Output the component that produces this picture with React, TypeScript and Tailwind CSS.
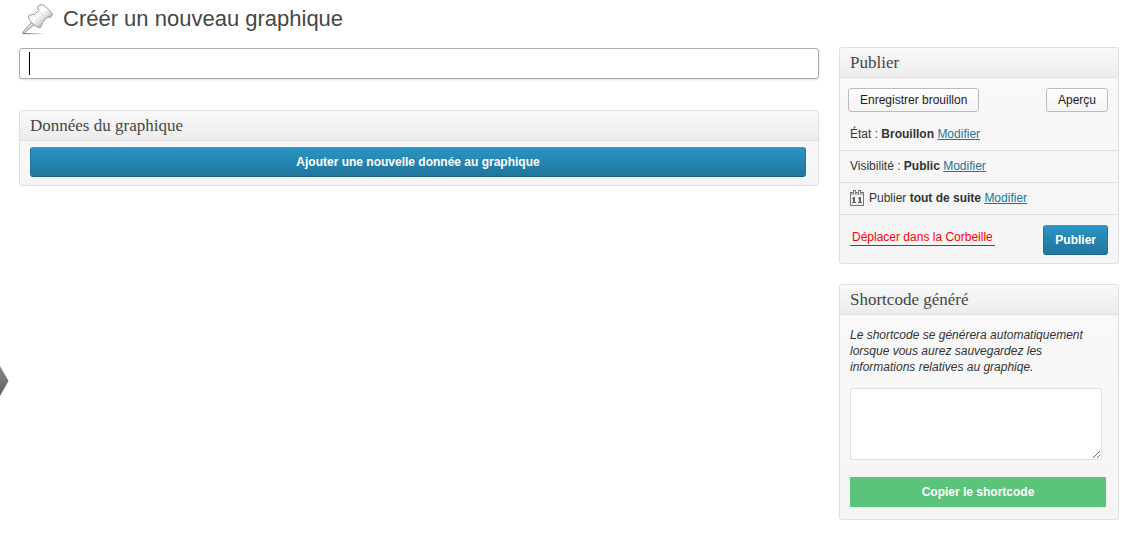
import type { ReactNode } from "react";

function PinIcon() {
  return (
    <svg width="32" height="32" viewBox="0 0 32 32" aria-hidden="true">
      <defs>
        <linearGradient id="pinBody" x1="0.2" y1="0.2" x2="0.8" y2="0.8">
          <stop offset="0" stopColor="#e6e6e6" />
          <stop offset="0.4" stopColor="#ffffff" />
          <stop offset="0.7" stopColor="#dddddd" />
          <stop offset="1" stopColor="#a8a8a8" />
        </linearGradient>
        <linearGradient id="pinShadow" x1="0" y1="0" x2="1" y2="0">
          <stop offset="0" stopColor="#777777" />
          <stop offset="1" stopColor="#777777" stopOpacity="0" />
        </linearGradient>
      </defs>
      <rect x="2" y="29" width="23" height="1.2" fill="url(#pinShadow)" />
      <path d="M10.8 18 L13.4 20.4 L3.4 29 L1.6 29.4 L2.2 27.8 Z" fill="#dedede" stroke="#858585" strokeWidth="0.9" strokeLinejoin="round" />
      <path
        d="M7.4 12.2 C8 10.9 10.6 10.6 13.6 10.4 L17.8 6.2 C16.6 4.4 16.2 2.8 17.4 1.8 L20.6 0.5 C23 0.6 29.6 6.8 31.2 10 C31.2 11.6 30.4 12.8 28.8 13.2 L26 13.4 L21.2 18.8 C21 20.8 20.4 23 19 23.6 C17 23.6 14 22 11.4 19.4 C9 17 7 14.2 7.4 12.2 Z"
        fill="url(#pinBody)"
        stroke="#8a8a8a"
        strokeWidth="0.9"
        strokeLinejoin="round"
      />
      <path d="M17.8 6.2 C19.6 9.2 22.4 12 26 13.4" fill="none" stroke="#d2d2d2" strokeWidth="0.7" />
      <path d="M13.6 10.4 C14.6 13.8 17.6 17.4 21.2 18.8" fill="none" stroke="#dadada" strokeWidth="0.7" />
    </svg>
  );
}

function CalendarIcon() {
  return (
    <svg width="14" height="16" viewBox="0 0 14 16" aria-hidden="true" shapeRendering="crispEdges">
      <rect x="0" y="2" width="14" height="14" fill="#777777" />
      <rect x="1" y="3" width="12" height="2" fill="#bdbdbd" />
      <rect x="1" y="5" width="12" height="10" fill="#f3f3f3" />
      <rect x="3" y="0" width="3" height="4" fill="#777777" />
      <rect x="4" y="1" width="1" height="3" fill="#ffffff" />
      <rect x="8" y="0" width="3" height="4" fill="#777777" />
      <rect x="9" y="1" width="1" height="3" fill="#ffffff" />
      <path d="M3 7h2v5h1v1H2v-1h1V9H2V8h1zM9 7h2v5h1v1H8v-1h1V9H8V8h1z" fill="#666666" />
    </svg>
  );
}

function Panel({ title, children }: { title: string; children: ReactNode }) {
  return (
    <section className="rounded-[3px] border border-[#dfdfdf] bg-linear-to-b from-[#f9f9f9] to-[#f5f5f5]">
      <h2 className="h-[30px] rounded-t-[3px] border-b border-[#dfdfdf] bg-linear-to-b from-[#f9f9f9] to-[#ececec] px-2.5 font-['Liberation_Serif',serif] text-[17px] leading-[29px] text-[#464646]">
        {title}
      </h2>
      {children}
    </section>
  );
}

const primary =
  "h-[30px] rounded-[3px] border border-[#21759b] border-t-[#2e9fd2] border-b-[#1e6a8d] bg-linear-to-b from-[#2a95c5] to-[#21759b] text-xs font-bold text-white";
const secondary =
  "h-6 rounded-[3px] border border-[#bbbbbb] bg-linear-to-b from-[#fefefe] to-[#f4f4f4] px-[11px] text-xs text-[#222222]";
const row = "flex h-8 items-center border-b border-[#dfdfdf] px-2.5 pb-0.5";

function EditLink() {
  return (
    <a href="#modifier" className="text-[#21759b] underline">
      Modifier
    </a>
  );
}

export default function App() {
  return (
    <div className="relative bg-white pr-[15px] pb-5 pl-[19px] font-['Liberation_Sans',Arial,sans-serif] text-xs text-[#333333]">
      <button type="button" aria-label="Ouvrir le menu" className="absolute top-[365px] left-0">
        <svg width="9" height="32" viewBox="0 0 9 32" className="block" aria-hidden="true">
          <defs>
            <linearGradient id="arrow" x1="0" y1="0" x2="0" y2="1">
              <stop offset="0" stopColor="#888888" />
              <stop offset="1" stopColor="#606060" />
            </linearGradient>
          </defs>
          <path d="M0 1 L8.5 16 L0 31 Z" fill="url(#arrow)" />
        </svg>
      </button>

      <header className="flex h-[47px] items-start gap-2.5 pt-1 pl-0.5">
        <PinIcon />
        <h1 className="text-[22px] leading-[30px] text-[#464646]">Créér un nouveau graphique</h1>
      </header>

      <div className="flex items-start gap-5">
        <main className="min-w-0 flex-1 pt-px">
          <div className="relative">
            <input
              type="text"
              aria-label="Titre du graphique"
              className="block h-[31px] w-full rounded-[3px] border border-[#aaaaaa] bg-white px-2 text-xl caret-transparent shadow-[0_1px_2px_#0000001f] outline-none"
            />
            <span className="absolute top-1 left-2.5 h-[23px] w-px bg-black" />
          </div>
          <div className="mt-[31px]">
            <Panel title="Données du graphique">
              <div className="pt-1.5 pr-3 pb-2 pl-2.5">
                <button type="button" className={`block w-full ${primary}`}>
                  Ajouter une nouvelle donnée au graphique
                </button>
              </div>
            </Panel>
          </div>
        </main>

        <aside className="flex w-[280px] shrink-0 flex-col gap-5">
          <Panel title="Publier">
            <div className="flex justify-between pt-2.5 pr-2.5 pb-[7px] pl-2">
              <button type="button" className={secondary}>Enregistrer brouillon</button>
              <button type="button" className={secondary}>Aperçu</button>
            </div>
            <div className={row}>
              <p>État : <strong>Brouillon</strong> <EditLink /></p>
            </div>
            <div className={row}>
              <p>Visibilité : <strong>Public</strong> <EditLink /></p>
            </div>
            <div className={`${row} gap-[5px]`}>
              <CalendarIcon />
              <p>Publier <strong>tout de suite</strong> <EditLink /></p>
            </div>
            <div className="flex items-start justify-between px-2.5 pt-2.5 pb-2">
              <a href="#corbeille" className="mt-1 border-b border-[#ff0000] px-0.5 leading-4 text-[#ff0000]">
                Déplacer dans la Corbeille
              </a>
              <button type="button" className={`px-[11px] ${primary}`}>Publier</button>
            </div>
          </Panel>

          <Panel title="Shortcode généré">
            <div className="pt-3 pr-3 pb-3 pl-2.5">
              <p className="leading-4 italic">
                Le shortcode se générera automatiquement lorsque vous aurez sauvegardez les informations relatives au graphiqe.
              </p>
              <div className="mt-[13px] pr-1">
                <textarea
                  aria-label="Shortcode"
                  className="block h-[72px] w-full resize rounded-[3px] border border-[#dfdfdf] bg-white p-1 outline-none"
                />
              </div>
              <button type="button" className="mt-[17px] block h-[30px] w-full bg-[#5bc47b] text-xs font-bold text-white">
                Copier le shortcode
              </button>
            </div>
          </Panel>
        </aside>
      </div>
    </div>
  );
}
